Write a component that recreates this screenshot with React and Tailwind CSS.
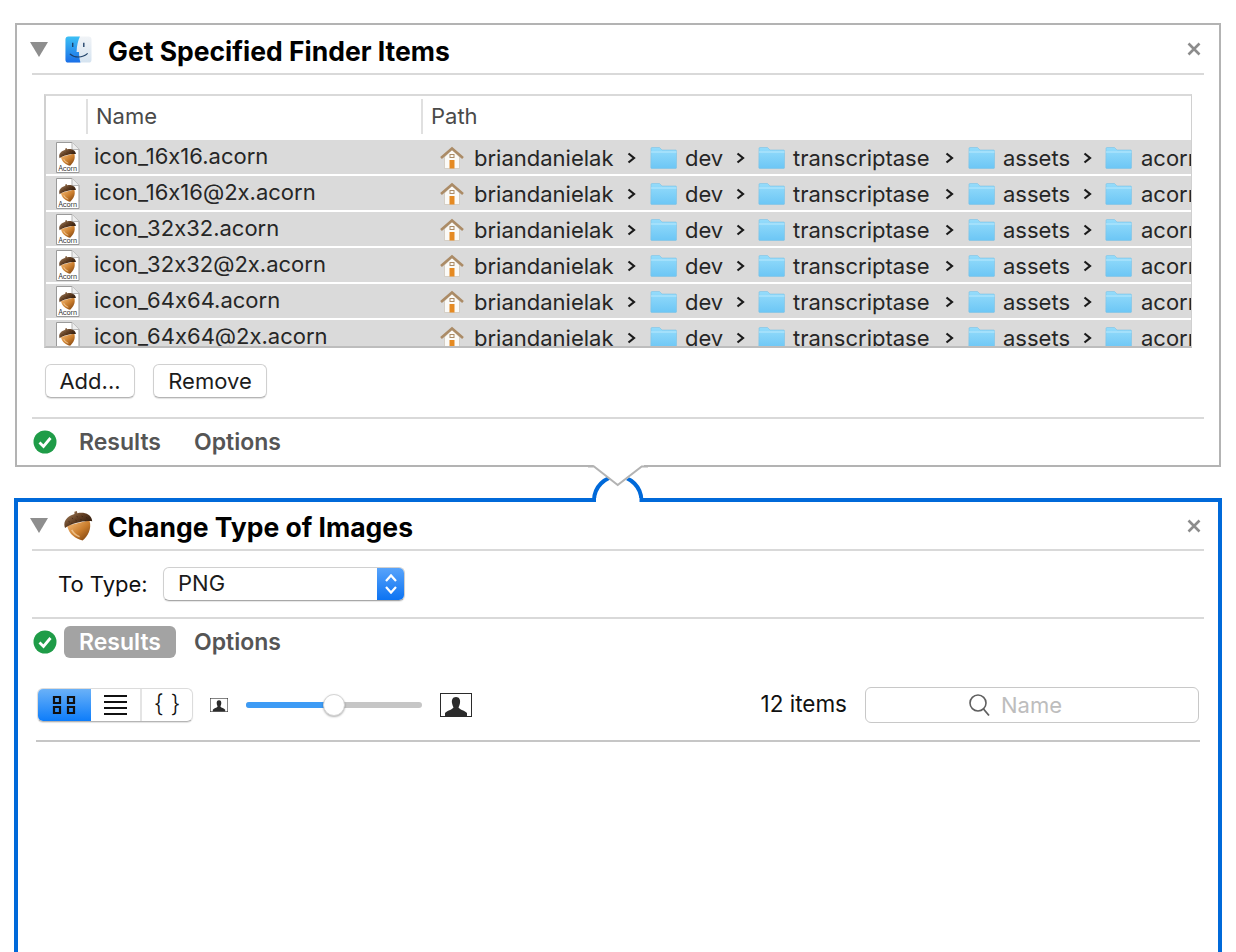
import React from 'react';

const FILES = [
  'icon_16x16.acorn',
  'icon_16x16@2x.acorn',
  'icon_32x32.acorn',
  'icon_32x32@2x.acorn',
  'icon_64x64.acorn',
  'icon_64x64@2x.acorn',
];

function Gradients() {
  return (
    <svg className="block w-0 h-0" aria-hidden="true">
      <defs>
        <linearGradient id="nut" x1="0" y1="0" x2="0.6" y2="1">
          <stop offset="0" stopColor="#eeb06a" />
          <stop offset="0.55" stopColor="#c97c2c" />
          <stop offset="1" stopColor="#8a4c14" />
        </linearGradient>
        <linearGradient id="cap" x1="0" y1="0" x2="0.8" y2="1">
          <stop offset="0" stopColor="#a98460" />
          <stop offset="0.6" stopColor="#5f3d22" />
          <stop offset="1" stopColor="#3a2312" />
        </linearGradient>
        <linearGradient id="folder" x1="0" y1="0" x2="0" y2="1">
          <stop offset="0" stopColor="#95dcfb" />
          <stop offset="1" stopColor="#6cc6f5" />
        </linearGradient>
        <linearGradient id="finderBlue" x1="0" y1="0" x2="0" y2="1">
          <stop offset="0" stopColor="#3cc0f5" />
          <stop offset="1" stopColor="#1a6fe8" />
        </linearGradient>
        <linearGradient id="finderLight" x1="0" y1="0" x2="0" y2="1">
          <stop offset="0" stopColor="#f1f4f7" />
          <stop offset="1" stopColor="#d5e3f0" />
        </linearGradient>
      </defs>
    </svg>
  );
}

function Disclosure() {
  return (
    <svg width="18" height="15" viewBox="0 0 18 15" className="shrink-0">
      <path d="M0 0H18L9 15Z" fill="#8e8e8e" />
    </svg>
  );
}

function CloseX() {
  return (
    <svg width="14" height="14" viewBox="0 0 14 14" className="shrink-0">
      <path d="M1.5 1.5L12.5 12.5M12.5 1.5L1.5 12.5" stroke="#8c8c8c" strokeWidth="2.6" />
    </svg>
  );
}

function FinderIcon() {
  return (
    <svg width="27" height="27" viewBox="0 0 28 28" className="shrink-0 -translate-x-[1px]">
      <rect x="0.5" y="0.5" width="27" height="27" rx="3" fill="url(#finderLight)" />
      <path d="M3.5 0.5H15.5C13.5 5 12.2 10 12 16.5H14.5C14.5 20 15 23.5 16 27.5H3.5a3 3 0 0 1-3-3V3.5a3 3 0 0 1 3-3Z" fill="url(#finderBlue)" />
      <path d="M8 7V11.5M19.5 7V11.5" stroke="#1d3f66" strokeWidth="1.4" />
      <path d="M5 18.5C10 23 18 23 23.5 18" fill="none" stroke="#1d3f66" strokeWidth="1.2" />
    </svg>
  );
}

// tilted acorn, drawn in a 30x30 box
function AcornShape() {
  return (
    <g transform="rotate(-14 15 15)">
      <path d="M3.5 12C3 21 9 27 15 30C21 27 27 21 26.5 12Z" fill="url(#nut)" />
      <path d="M7 17C8 21 10.5 24 13 25.5" fill="none" stroke="#f8d6a8" strokeWidth="1.6" opacity="0.7" />
      <path d="M1 13.5C0 6 7 2.5 13.5 2.2L14 0H16.5L16.5 2.2C23 2.5 30 6 29 13.5C22 10.5 8 10.5 1 13.5Z" fill="url(#cap)" />
      <path d="M6 8l1 1M10 5.5l1 1M15 5l1 1M20 6l1 1M24 8.5l1 1M8 10.5l1 .6M13 8.5l1 1M18 9l1 .6M22 11l1 .6" stroke="#2f1b0c" strokeWidth="0.9" opacity="0.6" />
    </g>
  );
}

function Acorn() {
  return (
    <svg width="30" height="30" viewBox="0 0 30 30" className="shrink-0">
      <AcornShape />
    </svg>
  );
}

function DocIcon({ label }) {
  return (
    <svg width="25" height="31" viewBox="0 0 25 31" className="shrink-0">
      <path d="M1.5 0.5H17L24 7.5V30.5H1.5Z" fill="#fff" stroke="#9a9a9a" />
      <path d="M17 0.5V7.5H24" fill="#eee" stroke="#b5b5b5" />
      <svg x="4" y="6" width="18" height="18" viewBox="0 0 30 30">
        <AcornShape />
      </svg>
      {label && (
        <text x="12.7" y="29" textAnchor="middle" fontSize="7" textLength="19" fill="#333" fontFamily="Inter, sans-serif">Acorn</text>
      )}
    </svg>
  );
}

function HomeIcon() {
  return (
    <svg width="24" height="24" viewBox="0 0 24 24" className="shrink-0">
      <path d="M4.5 11V22.5H19.5V11L12 3.5Z" fill="#fbfaf7" stroke="#cfc8bc" strokeWidth="0.8" />
      <path d="M1 12L12 2.5L23 12" fill="none" stroke="#ab8b66" strokeWidth="2.6" />
      <rect x="10" y="8.5" width="4" height="3" fill="none" stroke="#ab8b66" strokeWidth="1" />
      <rect x="9.5" y="14" width="5" height="8.5" fill="#e58a22" />
    </svg>
  );
}

function FolderIcon() {
  return (
    <svg width="27" height="22" viewBox="0 0 27 22" className="shrink-0">
      <path d="M1 1.5C1 .9 1.4.5 2 .5H9.5L12 3H25.5C26.2 3 26.5 3.4 26.5 4V20.5C26.5 21.2 26.2 21.5 25.5 21.5H1.8C1.2 21.5.8 21.2.8 20.5Z" fill="url(#folder)" stroke="#7cc3e6" strokeWidth="0.6" />
      <path d="M1 5H26.5" stroke="#b9e9fd" strokeWidth="1" />
    </svg>
  );
}

function Chevron() {
  return (
    <svg width="9" height="12" viewBox="0 0 9 12" className="shrink-0">
      <path d="M1.5 1.5L7 6L1.5 10.5" fill="none" stroke="#1a1a1a" strokeWidth="2.2" />
    </svg>
  );
}

function CheckBadge() {
  return (
    <svg width="24" height="24" viewBox="0 0 24 24" className="shrink-0">
      <circle cx="12" cy="12" r="11.5" fill="#1f9c48" />
      <path d="M6.5 12.5L10.5 16.5L17.5 8" fill="none" stroke="#fff" strokeWidth="2.8" />
    </svg>
  );
}

function Person({ width, height }) {
  return (
    <svg width={width} height={height} viewBox="0 0 32 24" preserveAspectRatio="none" className="shrink-0">
      <rect x="0.5" y="0.5" width="31" height="23" fill="#fff" stroke="#2b2b2b" />
      <path d="M16 4C12.5 4 11.5 7 12 10C12.3 12 13 13 13.5 14.5C12 17 7 17.5 5 20V23H27V20C25 17.5 20 17 18.5 14.5C19 13 19.7 12 20 10C20.5 7 19.5 4 16 4Z" fill="#2b2b2b" />
    </svg>
  );
}

function Row({ name, label }) {
  return (
    <div className="h-[34px] mb-[2px] bg-[#dadada] flex items-center shrink-0 whitespace-nowrap text-[#262626]">
      <div className="w-[48px] pl-[9px] shrink-0 flex items-center"><DocIcon label={label} /></div>
      <div className="w-[346px] shrink-0 -mt-[1px]">{name}</div>
      <div className="flex items-center mt-[2px]">
        <HomeIcon />
        <span className="w-[163px] pl-[10px] shrink-0">briandanielak</span>
        <Chevron />
        <span className="w-[14px] shrink-0" />
        <FolderIcon />
        <span className="w-[59px] pl-[8px] shrink-0">dev</span>
        <Chevron />
        <span className="w-[13px] shrink-0" />
        <FolderIcon />
        <span className="w-[160px] pl-[8px] shrink-0">transcriptase</span>
        <Chevron />
        <span className="w-[14px] shrink-0" />
        <FolderIcon />
        <span className="w-[88px] pl-[8px] shrink-0">assets</span>
        <Chevron />
        <span className="w-[13px] shrink-0" />
        <FolderIcon />
        <span className="pl-[9px] shrink-0">acorn</span>
      </div>
    </div>
  );
}

function PushButton({ width, children }) {
  return (
    <button className={`${width} h-[34px] pt-[1px] bg-white border border-[#d0d0d0] border-b-[#b5b5b5] rounded-[6px] shadow-[0_1px_1px_rgba(0,0,0,0.12)] text-[#1c1c1c] flex items-center justify-center`}>
      {children}
    </button>
  );
}

function ResultTabs({ active }) {
  return (
    <div className="flex items-center text-[23px]">
      <CheckBadge />
      <div className={active
        ? 'ml-[7px] w-[112px] h-[32px] rounded-[6px] bg-[#a3a3a3] text-white font-semibold flex items-center justify-center'
        : 'ml-[7px] w-[112px] h-[32px] text-[#555] font-semibold flex items-center justify-center'}>
        Results
      </div>
      <div className="ml-[18px] text-[#555] font-semibold">Options</div>
    </div>
  );
}

function Title({ icon, height, textOffset, children }) {
  return (
    <div className={`${height} border-b-2 border-[#d9d9d9] box-content flex items-center`}>
      <div className="ml-[-2px]"><Disclosure /></div>
      <div className="w-[30px] ml-[16px] flex justify-center">{icon}</div>
      <h1 className={`ml-[14px] ${textOffset} text-[26.5px] font-bold text-black leading-none`}>{children}</h1>
      <div className="ml-auto mr-[3px]"><CloseX /></div>
    </div>
  );
}

export default function App() {
  return (
    <div className="relative h-[952px] overflow-hidden bg-white pt-[23px] text-[22px] font-['Inter',sans-serif] [font-feature-settings:'calt'_0]">
      <div className="h-0"><Gradients /></div>

      {/* Get Specified Finder Items */}
      <section className="ml-[15px] w-[1206px] h-[444px] border-2 border-[#b3b3b3] px-[15px]">
        <Title icon={<FinderIcon />} height="h-[48px]" textOffset="pt-[5px]">Get Specified Finder Items</Title>

        <div className="mx-[12px] mt-[19px] h-[254px] border-2 border-t-[#d9d9d9] border-x-[#d0d0d0] border-r-[1px] border-b-[#bdbdbd] overflow-hidden flex flex-col">
          <div className="h-[44px] pt-[3px] shrink-0 flex items-start text-[#4a4a4a]">
            <div className="w-[40px] shrink-0" />
            <div className="w-[335px] shrink-0 h-[35px] border-l-2 border-[#e0e0e0] pl-[8px] flex items-center">Name</div>
            <div className="h-[35px] border-l-2 border-[#e0e0e0] pl-[8px] flex items-center">Path</div>
          </div>
          {FILES.map((f, i) => <Row key={f} name={f} label={i < 5} />)}
        </div>

        <div className="mx-[13px] mt-[16px] flex gap-[18px]">
          <PushButton width="w-[90px]">Add...</PushButton>
          <PushButton width="w-[114px]">Remove</PushButton>
        </div>

        <div className="mt-[19px] h-[46px] border-t-2 border-[#d9d9d9] box-content flex items-center pl-[1px]">
          <ResultTabs />
        </div>
      </section>

      {/* Change Type of Images */}
      <section className="ml-[14px] mt-[31px] w-[1208px] h-[600px] border-4 border-[#0069d9] px-[14px]">
        <Title icon={<Acorn />} height="h-[47px]" textOffset="pt-[3px]">Change Type of Images</Title>

        <div className="h-[66px] flex items-center">
          <span className="ml-[26px] w-[105px] text-[#111]">To Type:</span>
          <div className="w-[242px] h-[34px] -mt-[1px] flex rounded-[6px] border border-[#d0d0d0] border-b-[#a8a8a8] shadow-[0_1px_1px_rgba(0,0,0,0.1)] overflow-hidden">
            <span className="flex-1 pl-[14px] flex items-center text-[#1c1c1c]">PNG</span>
            <span className="w-[28px] -my-[1px] -mr-[1px] flex items-center justify-center bg-[linear-gradient(#5aa5fb,#0a72f2)]">
              <svg width="16" height="26" viewBox="0 0 16 26">
                <path d="M3 10L8 4.5L13 10M3 16L8 21.5L13 16" fill="none" stroke="#fff" strokeWidth="2.2" />
              </svg>
            </span>
          </div>
        </div>

        <div className="h-[46px] border-t-2 border-[#d9d9d9] box-content flex items-center pl-[1px] -mb-[2px]">
          <ResultTabs active />
        </div>

        <div className="mt-[24px] h-[36px] flex items-center px-[5px]">
          <div className="w-[156px] h-[34px] flex rounded-[6px] border border-[#dcdcdc] border-b-[#b5b5b5] shadow-[0_1px_1px_rgba(0,0,0,0.12)] overflow-hidden">
            <span className="w-[54px] -my-[1px] -ml-[1px] flex items-center justify-center bg-[linear-gradient(#6db3f8,#0a7bfa)]">
              <svg width="24" height="20" viewBox="0 0 24 20">
                <path d="M2 2H8V8H2ZM16 2H22V8H16ZM2 12H8V18H2ZM16 12H22V18H16Z" fill="none" stroke="#111" strokeWidth="2.2" />
              </svg>
            </span>
            <span className="w-[51px] flex items-center justify-center border-r-2 border-[#e4e4e4]">
              <svg width="23" height="20" viewBox="0 0 23 20">
                <path d="M0 1H23M0 7H23M0 13H23M0 19H23" stroke="#111" strokeWidth="1.8" />
              </svg>
            </span>
            <span className="flex-1 flex items-center justify-center text-[24px] font-light text-[#111] leading-none -mt-[2px]">{'{ }'}</span>
          </div>
          <div className="ml-[17px]"><Person width={18} height={14} /></div>
          <div className="ml-[18px] w-[176px] h-[6px] rounded-full bg-[#c6c6c6] relative">
            <div className="h-full w-[88px] rounded-full bg-[#3d9bf5]" />
            <div className="absolute left-[77px] top-[-8px] w-[22px] h-[22px] rounded-full bg-white border border-[#d5d5d5] shadow-[0_1px_2px_rgba(0,0,0,0.3)]" />
          </div>
          <div className="ml-[18px]"><Person width={32} height={24} /></div>
          <span className="ml-auto text-[22.5px] -mt-[2px] text-[#111]">12 items</span>
          <div className="ml-[18px] w-[334px] h-[36px] rounded-[6px] border border-[#c8c8c8] flex items-center pl-[102px] gap-[10px] text-[#bdbdbd]">
            <svg width="23" height="24" viewBox="0 0 23 24" className="shrink-0">
              <circle cx="10" cy="10" r="8" fill="none" stroke="#5f5f5f" strokeWidth="1.6" />
              <path d="M15.5 16L21 22.5" stroke="#5f5f5f" strokeWidth="1.8" />
            </svg>
            <span className="mt-[1px]">Name</span>
          </div>
        </div>

        <div className="mt-[17px] mx-[4px] h-[2px] bg-[#c6c6c6]" />
      </section>

      {/* connector between the two actions */}
      <svg className="absolute left-[588px] top-[460px]" width="60" height="46" viewBox="0 0 60 46">
        <path d="M6 40.5A23.7 24 0 0 1 53.4 40.5" fill="none" stroke="#0069d9" strokeWidth="4" />
        <path d="M8 38H51.5V43H8Z" fill="#fff" />
        <path d="M4 4H56V6.5L29.7 26Z" fill="#fff" />
        <path d="M0 6.5H6L29.7 25L53.7 6.5H60" fill="none" stroke="#b3b3b3" strokeWidth="2" />
      </svg>
    </div>
  );
}
